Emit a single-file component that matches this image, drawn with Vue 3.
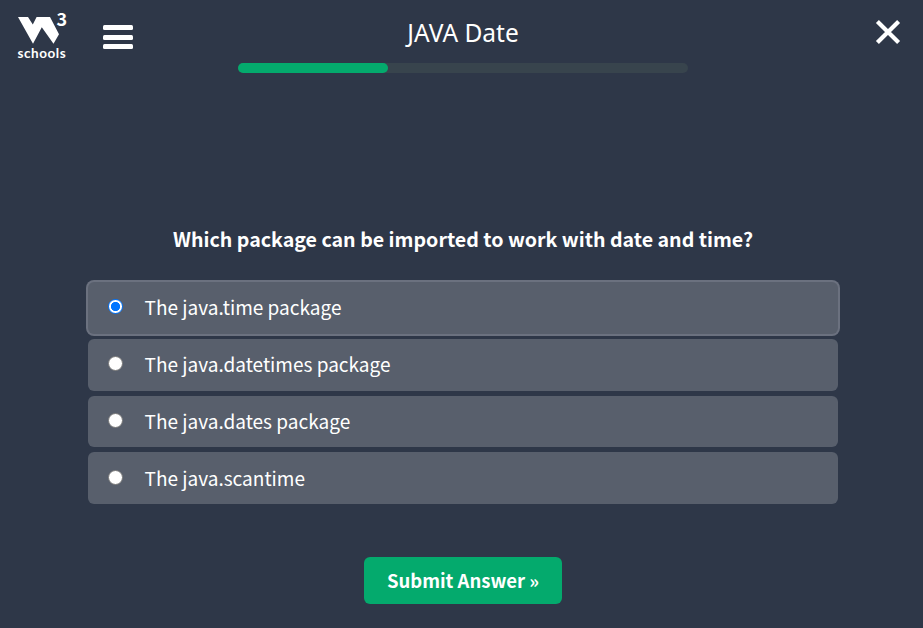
<script setup>
import { ref } from 'vue'

const options = [
  'The java.time package',
  'The java.datetimes package',
  'The java.dates package',
  'The java.scantime',
]
const selected = ref(0)
const progress = ref(33.4)
</script>

<template>
  <div class="quiz">
    <header class="topbar">
      <div class="left">
        <a class="logo" aria-label="W3Schools">
          <svg class="mark" width="50" height="32" viewBox="0 0 50 32">
            <path d="M0 5H10L14.8 12.4L18.6 5H32L41 22.3L35.5 31.8L23.8 15.2L15 31.8Z" fill="#fff" />
            <text class="three" x="38.4" y="13.8">3</text>
          </svg>
          <span class="name">schools</span>
        </a>
        <button class="menu" aria-label="Menu">
          <i></i><i></i><i></i>
        </button>
      </div>
      <div class="center">
        <h1>JAVA Date</h1>
        <div class="track"><div class="fill" :style="{ width: progress + '%' }"></div></div>
      </div>
      <button class="close" aria-label="Close">
        <svg width="26" height="26" viewBox="0 0 26 26">
          <path d="M2.4 2.4L23.6 23.6M23.6 2.4L2.4 23.6" stroke="#fff" stroke-width="4.2" />
        </svg>
      </button>
    </header>

    <main>
      <h2>Which package can be imported to work with date and time?</h2>
      <div class="options">
        <label
          v-for="(option, i) in options"
          :key="option"
          class="option"
          :class="{ selected: selected === i }"
        >
          <input v-model="selected" type="radio" name="answer" :value="i" />
          <span class="radio"></span>
          <span class="text">{{ option }}</span>
        </label>
      </div>
      <button class="submit">Submit Answer »</button>
    </main>
  </div>
</template>

<style>
body {
  background: #2e3748;
}
</style>

<style scoped>
.quiz {
  height: 628px;
  overflow: hidden;
  background: #2e3748;
  color: #fff;
  font-family: 'Noto Sans CJK SC', 'Noto Sans', sans-serif;
}
button {
  border: 0;
  padding: 0;
  background: none;
  color: inherit;
  font-family: inherit;
}
.topbar {
  display: grid;
  grid-template-columns: 238px 450px 1fr;
  height: 80px;
}
.left {
  display: flex;
  align-items: flex-start;
}
.logo {
  display: flex;
  flex-direction: column;
  width: 50px;
  margin: 12px 0 0 18px;
}
.mark {
  display: block;
  overflow: visible;
}
.three {
  fill: #fff;
  font: 700 18px 'Noto Sans CJK SC', sans-serif;
}
.name {
  margin: 1px 0 0 -0.5px;
  font: 700 13.5px/16px Lato, sans-serif;
  letter-spacing: 0.55px;
}
.menu {
  display: flex;
  flex-direction: column;
  gap: 4.6px;
  margin: 25px 0 0 35.4px;
}
.menu i {
  width: 30px;
  height: 5.1px;
  border-radius: 1.5px;
  background: #fff;
}
.center {
  display: flex;
  flex-direction: column;
  align-items: center;
}
h1 {
  margin: 17px 0 14px;
  font: 400 24.5px/32px 'Noto Sans', sans-serif;
}
.track {
  width: 450px;
  height: 10px;
  border-radius: 5px;
  background: #38444d;
}
.fill {
  height: 10px;
  border-radius: 5px;
  background: #04aa6d;
}
.close {
  justify-self: end;
  align-self: start;
  margin: 19px 22px 0 0;
}
.close svg {
  display: block;
}
main {
  display: flex;
  flex-direction: column;
  align-items: center;
  width: 750px;
  margin-left: 88px;
}
h2 {
  margin: 144px 0 0;
  font-size: 19.62px;
  font-weight: 700;
  line-height: 30px;
  white-space: nowrap;
}
.options {
  display: flex;
  flex-direction: column;
  gap: 5px;
  width: 100%;
  margin-top: 28px;
}
.option {
  display: flex;
  align-items: center;
  box-sizing: border-box;
  height: 51.75px;
  padding-left: 20px;
  border-radius: 6px;
  background: #585f6c;
}
.option.selected {
  box-shadow: 0 0 0 2px #6b717f;
}
.option input {
  position: absolute;
  opacity: 0;
}
.radio {
  box-sizing: border-box;
  width: 15px;
  height: 15px;
  margin: -2px 21.5px 0 0;
  border: 1px solid #767676;
  border-radius: 50%;
  background: #fff;
}
.selected .radio {
  border: 1.5px solid #0075ff;
  background: radial-gradient(circle, #0075ff 4.3px, #fff 4.9px);
}
.text {
  margin-top: -1.2px;
  font-size: 19.04px;
  line-height: 30px;
}
.submit {
  width: 198px;
  height: 47px;
  margin-top: 53px;
  border-radius: 6px;
  background: #04aa6d;
  font-size: 18.5px;
  font-weight: 700;
  line-height: 47px;
}
</style>
